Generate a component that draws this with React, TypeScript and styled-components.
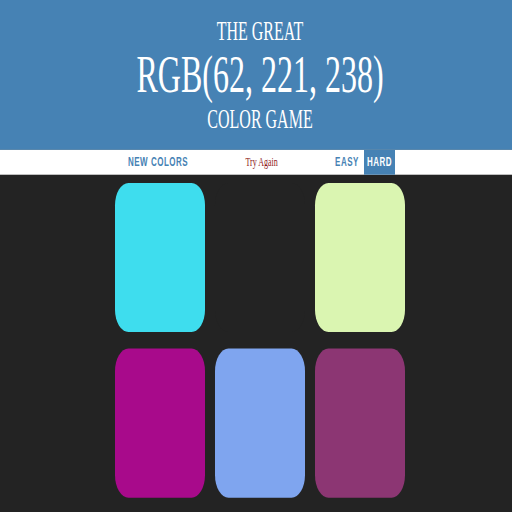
import styled, { createGlobalStyle } from 'styled-components';

const GlobalStyle = createGlobalStyle`
  html, body {
    margin: 0;
    padding: 0;
    background: #232323;
    overflow: hidden;
  }
`;

const Viewport = styled.div`
  width: 512px;
  height: 512px;
  overflow: hidden;
`;

// the game is laid out on a wide page and squeezed to fit the window
const Stage = styled.div`
  width: 1040px;
  height: 618px;
  transform: scale(0.5, 0.828);
  transform-origin: 0 0;
  font-family: 'Liberation Serif', 'Times New Roman', serif;
  font-size: 16px;
`;

const Title = styled.h1`
  margin: 0;
  padding: 20px 0;
  background: steelblue;
  color: #fff;
  font-size: 32px;
  font-weight: normal;
  line-height: 1.1;
  text-align: center;
  text-transform: uppercase;
`;

const ColorDisplay = styled.span`
  font-size: 200%;
`;

const Stripe = styled.div`
  display: flex;
  justify-content: center;
  align-items: stretch;
  gap: 4px;
  height: 30px;
  background: #fff;
`;

const Button = styled.button<{ $selected?: boolean }>`
  height: 100%;
  padding: 0 6px;
  border: none;
  outline: none;
  background: ${(p) => (p.$selected ? 'steelblue' : 'none')};
  color: ${(p) => (p.$selected ? '#fff' : 'steelblue')};
  font-family: 'Liberation Sans', Arial, sans-serif;
  font-size: 16px;
  font-weight: 700;
  letter-spacing: 1px;
  text-transform: uppercase;
  cursor: pointer;
`;

const Message = styled.span`
  display: flex;
  align-items: center;
  justify-content: center;
  width: 274px;
  color: #8f1a1a;
`;

const Board = styled.div`
  display: flex;
  flex-wrap: wrap;
  width: 600px;
  margin: 0 auto;
`;

const Square = styled.div<{ $color: string }>`
  width: 30%;
  aspect-ratio: 1;
  margin: 1.66%;
  border-radius: 15%;
  background: ${(p) => p.$color};
`;

export default function App() {
  const squares = [
    'rgb(62, 221, 238)',
    '#232323',
    '#daf5b1',
    '#a80a8b',
    '#7fa5ef',
    '#8c3673',
  ];

  return (
    <>
      <GlobalStyle />
      <Viewport>
        <Stage>
          <Title>
            The Great
            <br />
            <ColorDisplay>RGB(62, 221, 238)</ColorDisplay>
            <br />
            Color Game
          </Title>

          <Stripe>
            <Button>New Colors</Button>
            <Message>Try Again</Message>
            <Button>Easy</Button>
            <Button $selected>Hard</Button>
          </Stripe>

          <Board>
            {squares.map((color, index) => (
              <Square key={index} $color={color} />
            ))}
          </Board>
        </Stage>
      </Viewport>
    </>
  );
}
